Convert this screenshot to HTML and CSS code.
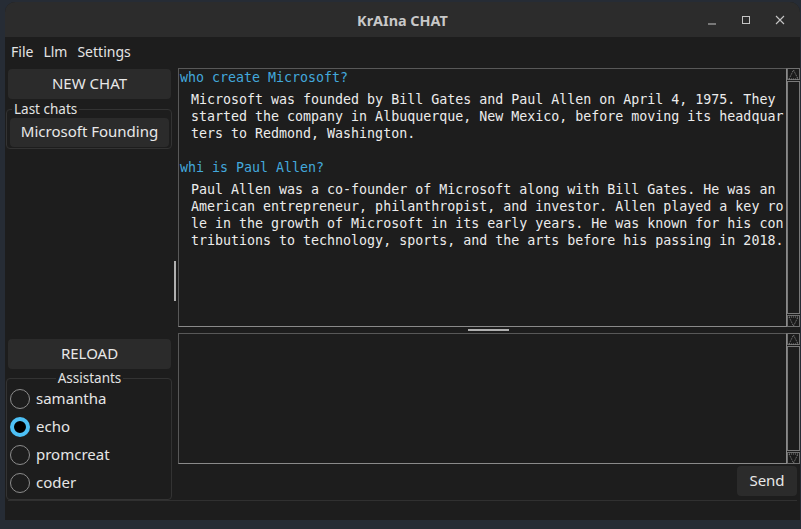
FILE: index.html
```html
<!DOCTYPE html>
<html>
<head>
<meta charset="utf-8">
<title>KrAIna CHAT</title>
<link rel="stylesheet" href="styles.css">
</head>
<body>
<div class="window">
  <div class="titlebar">
    <div></div>
    <div class="title">KrAIna CHAT</div>
    <div class="controls">
      <svg width="10" height="10" viewBox="0 0 10 10"><line x1="1" y1="9" x2="9" y2="9" stroke="#c4c4c4" stroke-width="1"/></svg>
      <svg width="10" height="10" viewBox="0 0 10 10"><rect x="1.5" y="1.5" width="7" height="7" fill="none" stroke="#c4c4c4" stroke-width="1"/></svg>
      <svg width="10" height="10" viewBox="0 0 10 10"><path d="M1 1 L9 9 M9 1 L1 9" stroke="#c4c4c4" stroke-width="1.1"/></svg>
    </div>
  </div>
  <div class="menubar">
    <span>File</span><span>Llm</span><span>Settings</span>
  </div>
  <div class="main">
    <div class="left">
      <div class="btn newchat">NEW CHAT</div>
      <fieldset class="frame lastchats">
        <legend>Last chats</legend>
        <div class="btn chatitem">Microsoft Founding</div>
      </fieldset>
      <div class="spacer"></div>
      <div class="btn reload">RELOAD</div>
      <fieldset class="frame assistants">
        <legend>Assistants</legend>
        <div class="radio"><span class="dot"></span><span>samantha</span></div>
        <div class="radio sel"><span class="dot"></span><span>echo</span></div>
        <div class="radio"><span class="dot"></span><span>promcreat</span></div>
        <div class="radio"><span class="dot"></span><span>coder</span></div>
      </fieldset>
    </div>
    <div class="vsash"><div class="vhandle"></div></div>
    <div class="right">
      <div class="chatwrap">
        <div class="textbox chat">
<div class="q">who create Microsoft?</div>
<div class="a">Microsoft was founded by Bill Gates and Paul Allen on April 4, 1975. They 
started the company in Albuquerque, New Mexico, before moving its headquar
ters to Redmond, Washington.</div>
<div class="blank"></div>
<div class="q">whi is Paul Allen?</div>
<div class="a">Paul Allen was a co-founder of Microsoft along with Bill Gates. He was an 
American entrepreneur, philanthropist, and investor. Allen played a key ro
le in the growth of Microsoft in its early years. He was known for his con
tributions to technology, sports, and the arts before his passing in 2018.</div>
        </div>
        <div class="sb">
          <div class="arrow"><svg width="11" height="11" viewBox="0 0 11 11"><polygon points="1,10 5.5,1 10,10" fill="none" stroke="#8a8a8a" stroke-width="1" stroke-dasharray="1 1"/></svg></div>
          <div class="thumb"></div>
          <div class="arrow"><svg width="11" height="11" viewBox="0 0 11 11"><polygon points="1,1 5.5,10 10,1" fill="none" stroke="#8a8a8a" stroke-width="1" stroke-dasharray="1 1"/></svg></div>
        </div>
      </div>
      <div class="hsash"><div class="hhandle"></div></div>
      <div class="inputwrap">
        <div class="textbox input"></div>
        <div class="sb">
          <div class="arrow"><svg width="11" height="11" viewBox="0 0 11 11"><polygon points="1,10 5.5,1 10,10" fill="none" stroke="#8a8a8a" stroke-width="1" stroke-dasharray="1 1"/></svg></div>
          <div class="thumb"></div>
          <div class="arrow"><svg width="11" height="11" viewBox="0 0 11 11"><polygon points="1,1 5.5,10 10,1" fill="none" stroke="#8a8a8a" stroke-width="1" stroke-dasharray="1 1"/></svg></div>
        </div>
      </div>
      <div class="sendrow"><div class="btn send">Send</div></div>
    </div>
  </div>
  <div class="statusbar"></div>
</div>
</body>
</html>
```
FILE: styles.css
```css
html, body {
  margin: 0;
  padding: 0;
}
body {
  width: 801px;
  height: 529px;
  overflow: hidden;
  background: #262c35;
  font-family: "Noto Sans", "DejaVu Sans", sans-serif;
  color: #e6e6e6;
}
.window {
  margin: 2px 0 0 5px;
  width: 795px;
  height: 518px;
  background: #1d1d1d;
  border-radius: 10px 10px 0 0;
  display: flex;
  flex-direction: column;
  overflow: hidden;
}
.titlebar {
  height: 35px;
  flex: none;
  background: #2c2c2c;
  display: grid;
  grid-template-columns: 1fr auto 1fr;
  align-items: center;
}
.title {
  font-weight: bold;
  font-size: 14.4px;
  color: #c8c8c8;
  padding-top: 1px;
}
.controls {
  display: flex;
  justify-content: flex-end;
  gap: 24px;
  padding-right: 15px;
  padding-top: 1px;
}
.controls svg {
  display: block;
}
.menubar {
  height: 25px;
  flex: none;
  display: flex;
  gap: 10px;
  padding-left: 6px;
  font-size: 14px;
  line-height: 20px;
  padding-top: 5px;
  box-sizing: border-box;
  color: #e4e4e4;
}
.main {
  flex: 1;
  display: flex;
  min-height: 0;
}
.left {
  width: 166px;
  margin-left: 1px;
  display: flex;
  flex-direction: column;
}
.btn {
  background: #2b2b2b;
  border-radius: 4px;
  font-size: 15px;
  color: #e8e8e8;
  display: flex;
  align-items: center;
  justify-content: center;
  box-sizing: border-box;
  padding-bottom: 3px;
}
.newchat {
  margin: 7px 1px 0 2px;
  height: 30px;
}
.reload {
  margin: 0 1px 0 2px;
  height: 30px;
  flex: none;
}
.frame {
  margin: 0;
  border: 1px solid #333;
  border-radius: 4px;
  padding: 0 2px 1px 3px;
  min-width: 0;
}
.frame legend {
  font-size: 13.5px;
  line-height: 18px;
  padding: 0 2px;
  color: #e2e2e2;
}
.lastchats {
  margin-top: 1px;
}
.lastchats legend {
  margin-left: 2px;
}
.chatitem {
  height: 29px;
}
.spacer {
  flex: 1;
}
.assistants {
  flex: none;
  height: 131px;
  box-sizing: border-box;
  display: flex;
  flex-direction: column;
  gap: 4px;
}
.assistants legend {
  margin: 0 auto;
}
.radio {
  height: 24px;
  display: flex;
  align-items: center;
  gap: 6px;
  font-size: 15px;
  color: #e6e6e6;
}
.radio span:last-child {
  padding-bottom: 2px;
}
.dot {
  width: 20px;
  height: 20px;
  box-sizing: border-box;
  border-radius: 50%;
  border: 1.5px solid #8c8c8c;
  background: transparent;
}
.radio.sel .dot {
  border: 4px solid #4dc0f5;
  background: #000;
}
.vsash {
  width: 6px;
  display: flex;
  align-items: center;
  justify-content: center;
}
.vhandle {
  width: 2px;
  height: 40px;
  background: #b0b0b0;
}
.right {
  flex: 1;
  display: flex;
  flex-direction: column;
}
.chatwrap {
  margin-top: 6px;
  height: 259px;
  display: flex;
}
.inputwrap {
  height: 131px;
  display: flex;
}
.textbox {
  flex: 1;
  border: 1px solid;
  border-color: #585858 #8a8a8a #8a8a8a #585858;
  background: #1d1d1d;
}
.chat {
  font-family: "DejaVu Sans Mono", "Liberation Mono", monospace;
  font-size: 13.3px;
  line-height: 17px;
  padding-left: 1px;
  overflow: hidden;
}
.q {
  color: #43a8dc;
  margin-bottom: 5px;
  white-space: pre;
}
.a {
  color: #ececec;
  margin-left: 11px;
  white-space: pre;
}
.blank {
  height: 17px;
}
.sb {
  width: 13px;
  display: flex;
  flex-direction: column;
}
.arrow {
  height: 12px;
  box-sizing: border-box;
  border: 1px solid #707070;
  display: flex;
  align-items: center;
  justify-content: center;
  background: #1a1a1a;
}
.arrow svg {
  display: block;
}
.thumb {
  flex: 1;
  border: 1px solid #7a7a7a;
  margin: 1px 0;
  background: #1d1d1d;
}
.hsash {
  height: 6px;
  display: flex;
  align-items: center;
  justify-content: center;
}
.hhandle {
  width: 41px;
  height: 2px;
  background: #b0b0b0;
  margin-right: 2px;
}
.sendrow {
  display: flex;
  justify-content: flex-end;
  margin-top: 2px;
  padding-right: 3px;
}
.send {
  width: 60px;
  height: 30px;
}
.statusbar {
  height: 20px;
  flex: none;
  border-top: 1px solid #303030;
  margin: 0 3px;
  box-sizing: border-box;
}
```
